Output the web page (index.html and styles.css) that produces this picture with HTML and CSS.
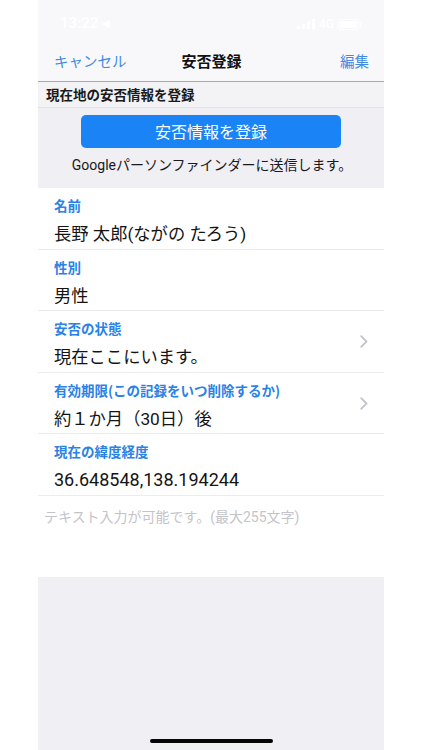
FILE: index.html
```html
<!DOCTYPE html>
<html lang="ja">
<head>
<meta charset="utf-8">
<title>安否登録</title>
<link rel="stylesheet" href="styles.css">
</head>
<body>
<div class="phone">
  <div class="status">
    <span class="time">13:22 ◂</span>
    <span class="icons">
      <svg width="18" height="10" viewBox="0 0 18 10"><rect x="0" y="7" width="3" height="3" fill="#fff"/><rect x="5" y="5" width="3" height="5" fill="#fff"/><rect x="10" y="2.5" width="3" height="7.5" fill="#fff"/><rect x="15" y="0" width="3" height="10" fill="#fff"/></svg>
      <span class="net">4G</span>
      <svg width="24" height="11" viewBox="0 0 24 11"><rect x="0.5" y="0.5" width="20" height="10" rx="2.5" fill="none" stroke="#fff"/><rect x="2" y="2" width="17" height="7" rx="1.5" fill="#fff"/><rect x="21.5" y="3.5" width="1.5" height="4" fill="#fff"/></svg>
    </span>
  </div>
  <div class="nav">
    <span class="nav-btn left">キャンセル</span>
    <span class="nav-title">安否登録</span>
    <span class="nav-btn right">編集</span>
  </div>
  <div class="section-header">現在地の安否情報を登録</div>
  <div class="action">
    <div class="button">安否情報を登録</div>
    <div class="note">Googleパーソンファインダーに送信します。</div>
  </div>
  <div class="list">
    <div class="row">
      <div class="row-text">
        <div class="label">名前</div>
        <div class="value">長野 太郎(ながの たろう)</div>
      </div>
    </div>
    <div class="row">
      <div class="row-text">
        <div class="label">性別</div>
        <div class="value">男性</div>
      </div>
    </div>
    <div class="row">
      <div class="row-text">
        <div class="label">安否の状態</div>
        <div class="value">現在ここにいます。</div>
      </div>
      <svg class="chev" width="8" height="13" viewBox="0 0 8 13"><path d="M1.2 1.2 L6.5 6.5 L1.2 11.8" fill="none" stroke="#c4c4c9" stroke-width="1.8" stroke-linecap="round" stroke-linejoin="round"/></svg>
    </div>
    <div class="row">
      <div class="row-text">
        <div class="label">有効期限(この記録をいつ削除するか)</div>
        <div class="value">約１か月（30日）後</div>
      </div>
      <svg class="chev" width="8" height="13" viewBox="0 0 8 13"><path d="M1.2 1.2 L6.5 6.5 L1.2 11.8" fill="none" stroke="#c4c4c9" stroke-width="1.8" stroke-linecap="round" stroke-linejoin="round"/></svg>
    </div>
    <div class="row">
      <div class="row-text">
        <div class="label">現在の緯度経度</div>
        <div class="value num">36.648548,138.194244</div>
      </div>
    </div>
  </div>
  <div class="textarea">テキスト入力が可能です。(最大255文字)</div>
  <div class="bottom">
    <div class="home"></div>
  </div>
</div>
</body>
</html>
```
FILE: styles.css
```css
* { box-sizing: border-box; }
html, body { margin: 0; padding: 0; background: #ffffff; }
body {
  font-family: "Roboto", "Noto Sans CJK JP", sans-serif;
  color: #111;
}
.phone {
  width: 346px;
  height: 750px;
  margin-left: 38px;
  display: flex;
  flex-direction: column;
  background: #ffffff;
}
.status {
  height: 41px;
  background: #f8f8fa;
  display: flex;
  justify-content: space-between;
  align-items: flex-start;
  padding: 14px 22px 0 22px;
  color: #ffffff;
  font-size: 15px;
  font-weight: 600;
}
.status .icons { display: flex; align-items: center; gap: 4px; padding-top: 3px; }
.status .net { font-size: 12px; }
.nav {
  height: 41px;
  background: #f8f8fa;
  border-bottom: 1px solid #88aedb;
  display: grid;
  grid-template-columns: 1fr auto 1fr;
  align-items: center;
  padding: 0 15px 1px 16px;
}
.nav-btn {
  font-family: "Noto Sans CJK JP", sans-serif;
  font-size: 14.5px;
  color: #3d8ae3;
}
.nav-btn.right { justify-self: end; }
.nav-title {
  font-family: "Noto Sans CJK JP", sans-serif;
  font-size: 15px;
  font-weight: 700;
  color: #111;
}
.section-header {
  height: 26px;
  background: #f3f3f5;
  border-bottom: 1px solid #e3e3e7;
  font-family: "Noto Sans CJK JP", sans-serif;
  font-size: 13.5px;
  font-weight: 700;
  line-height: 24px;
  padding-left: 8px;
  color: #1a1a1a;
}
.action {
  height: 80px;
  background: #efeff4;
  display: flex;
  flex-direction: column;
  align-items: center;
  padding-top: 7px;
}
.button {
  width: 260px;
  height: 33px;
  border-radius: 5px;
  background: #1a84f6;
  color: #ffffff;
  font-family: "Noto Sans CJK JP", sans-serif;
  font-size: 16px;
  line-height: 33px;
  text-align: center;
}
.note {
  margin-top: 8px;
  font-size: 14px;
  line-height: 18px;
  color: #1a1a1a;
  margin-left: 2px;
}
.list { background: #ffffff; }
.row {
  height: 61.6px;
  border-bottom: 1px solid #ececef;
  display: flex;
  align-items: flex-start;
  padding: 9px 16px 0 16px;
}
.row-text { flex: 1; display: flex; flex-direction: column; }
.label {
  font-family: "Noto Sans CJK JP", sans-serif;
  font-size: 13.5px;
  font-weight: 700;
  line-height: 16px;
  color: #2a82e6;
}
.value {
  font-size: 17.3px;
  line-height: 24px;
  margin-top: 9px;
  color: #141414;
}
.value.num { font-size: 18px; }
.chev { flex: none; align-self: center; margin-top: -9px; }
.textarea {
  height: 81px;
  background: #ffffff;
  padding: 12px 0 0 6px;
  font-size: 14px;
  line-height: 18px;
  color: #c4c4c8;
}
.bottom {
  flex: 1;
  background: #efeff4;
  display: flex;
  justify-content: center;
  align-items: flex-end;
  padding-bottom: 7px;
}
.home {
  width: 123px;
  height: 4.5px;
  border-radius: 3px;
  background: #050505;
}
```
